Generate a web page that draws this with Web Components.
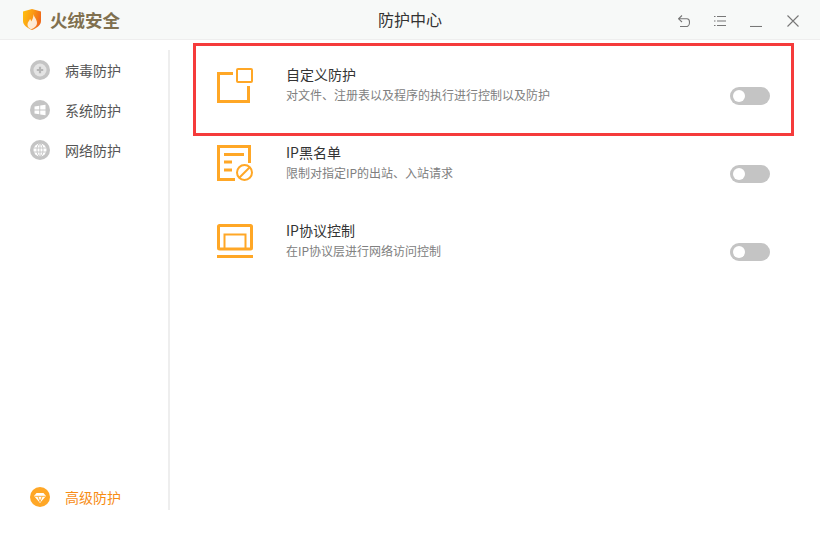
<!DOCTYPE html>
<html>
<head>
<meta charset="utf-8">
<style>
  html, body { margin: 0; padding: 0; }
  body { width: 820px; height: 540px; overflow: hidden; background: #fff; font-family: "Noto Sans CJK SC", "Liberation Sans", sans-serif; }
</style>
</head>
<body>
<app-window>
  <title-bar slot="top"></title-bar>
  <side-nav slot="side">
    <nav-item label="病毒防护" icon="virus"></nav-item>
    <nav-item label="系统防护" icon="windows"></nav-item>
    <nav-item label="网络防护" icon="globe"></nav-item>
    <nav-item slot="bottom" label="高级防护" icon="gem" active></nav-item>
  </side-nav>
  <guard-row highlight icon="custom" heading="自定义防护" text="对文件、注册表以及程序的执行进行控制以及防护"></guard-row>
  <guard-row icon="list" heading="IP黑名单" text="限制对指定IP的出站、入站请求"></guard-row>
  <guard-row icon="screen" heading="IP协议控制" text="在IP协议层进行网络访问控制"></guard-row>
</app-window>
<script>
class AppWindow extends HTMLElement {
  constructor() {
    super();
    this.attachShadow({ mode: "open" });
    this.shadowRoot.innerHTML = `
      <style>
        :host { display: flex; flex-direction: column; width: 820px; height: 540px; }
        .body { display: flex; flex: 1; min-height: 0; }
        .main { flex: 1; padding-top: 3px; display: flex; flex-direction: column; }
      </style>
      <slot name="top"></slot>
      <div class="body">
        <slot name="side"></slot>
        <div class="main"><slot></slot></div>
      </div>`;
  }
}
customElements.define("app-window", AppWindow);

class TitleBar extends HTMLElement {
  constructor() {
    super();
    this.attachShadow({ mode: "open" });
    this.shadowRoot.innerHTML = `
      <style>
        :host { display: flex; align-items: center; height: 39px; background: #f7f9f8; border-bottom: 1px solid #eeeeee; position: relative; flex: none; }
        .logo { display: flex; align-items: center; gap: 9px; padding-left: 23px; width: 300px; }
        .brand { font-size: 17.5px; font-weight: 700; color: #80704f; line-height: 20px; }
        .title { position: absolute; left: 0; right: 0; text-align: center; font-size: 16px; color: #333; line-height: 39px; }
        .tools { margin-left: auto; display: flex; padding-right: 21px; gap: 24px; position: relative; top: 1px; }
        .tools svg:last-child { margin-left: 1px; }
        svg { display: block; }
        .tools svg { fill: none; stroke: #777; stroke-width: 1.1; }
      </style>
      <div class="logo">
        <svg width="18" height="21" viewBox="0 0 18 21">
          <defs><linearGradient id="g" x1="0" y1="0" x2="1" y2="0.3"><stop offset="0" stop-color="#ffc20e"/><stop offset=".55" stop-color="#fb9a14"/><stop offset="1" stop-color="#ef6a1a"/></linearGradient></defs>
          <path d="M0 2.500 9 0l9 2.500v9.500c0 4-4 7-9 9-5-2-9-5-9-9z" fill="url(#g)"/>
          <path d="M10.500 5c.5 3.500 3.500 5 3.500 9 0 3-2.500 5-6 6.300C5.500 19 4.500 17.500 4.500 15.500c0-2.500 2-3.500 2.500-5.500.8.800 1 1.500 1.100 2.500C9.500 10.500 10.500 8 10.500 5z" fill="#fff" fill-opacity=".82"/>
        </svg>
        <span class="brand">火绒安全</span>
      </div>
      <div class="title">防护中心</div>
      <div class="tools">
        <svg width="12" height="12" viewBox="0 0 12 12"><path d="M4 .5.5 3.800 4 7M.5 3.800H9c1.500 0 2.500 1.200 2.500 3.300S10.500 11.500 9 11.500H2"/></svg>
        <svg width="12" height="12" viewBox="0 0 12 12"><path d="M0 1.500h1.500M3 1.500h9M0 6h1.500M3 6h9M0 10.500h1.500M3 10.500h9"/></svg>
        <svg width="12" height="12" viewBox="0 0 12 12"><path d="M0 11.500h12"/></svg>
        <svg width="12" height="12" viewBox="0 0 12 12"><path d="M.5.500l11 11M11.500.500l-11 11"/></svg>
      </div>`;
  }
}
customElements.define("title-bar", TitleBar);

class SideNav extends HTMLElement {
  constructor() {
    super();
    this.attachShadow({ mode: "open" });
    this.shadowRoot.innerHTML = `
      <style>
        :host { display: flex; flex-direction: column; justify-content: space-between; box-sizing: border-box; width: 170px; height: 460px; margin: 10px 0 0; border-right: 2px solid #eeeeee; flex: none; }
        .top { display: flex; flex-direction: column; }
        .bottom { display: block; }
      </style>
      <div class="top"><slot></slot></div>
      <div class="bottom"><slot name="bottom"></slot></div>`;
  }
}
customElements.define("side-nav", SideNav);

const NAV_ICONS = {
  virus: `<circle cx="10" cy="10" r="6.500" fill="#e4e4e4"/><path d="M10 6.800v6.400M6.800 10h6.400" stroke="#b5b5b5" stroke-width="2.200"/>`,
  windows: `<path d="M4.500 6.500 9.300 5.800v3.700H4.500zM10.200 5.600 15.500 4.800v4.700h-5.300zM4.500 10.500h4.800v3.700l-4.800-.7zM10.200 10.500h5.300v4.700l-5.300-.8z" fill="#fff"/>`,
  globe: `<circle cx="10" cy="10" r="6.500" fill="#fff"/><g fill="none" stroke="#c4c4c4" stroke-width=".9"><ellipse cx="10" cy="10" rx="3" ry="6.500"/><path d="M3.500 8h13M3.500 12h13M10 3.500v13"/></g>`,
  gem: `<path d="M6.500 6h7L16 9l-6 7-6-7z" fill="#fff"/><path d="M4.500 9.300h11M7.800 9.300l2.200 5.500 2.200-5.500" stroke="#ffa726" stroke-width=".9" fill="none"/>`
};

class NavItem extends HTMLElement {
  constructor() {
    super();
    this.attachShadow({ mode: "open" });
  }
  connectedCallback() {
    const on = this.hasAttribute("active");
    this.shadowRoot.innerHTML = `
      <style>
        :host { display: flex; align-items: center; height: 40px; padding-left: 30px; gap: 15px; }
        :host([active]) { height: 26px; }
        span { font-size: 14px; color: ${on ? "#f78c14" : "#555"}; line-height: 20px; }
        svg { display: block; }
      </style>
      <svg width="20" height="20" viewBox="0 0 20 20">
        <circle cx="10" cy="10" r="10" fill="${on ? "#ffa726" : "#c4c4c4"}"/>
        ${NAV_ICONS[this.getAttribute("icon")]}
      </svg>
      <span>${this.getAttribute("label")}</span>`;
  }
}
customElements.define("nav-item", NavItem);

const ROW_ICONS = {
  custom: `<path d="M16 6.500H1.500v28h30V19"/><rect x="20" y="2" width="15" height="13" rx="1" stroke-width="2"/>`,
  list: `<path d="M18 34.500H1.500v-33h31V18"/><path d="M7 9.500h20M7 17h8M7 25h8"/><circle cx="27.500" cy="27.500" r="7.500" stroke-width="2"/><path d="M22 33l11-11" stroke-width="2"/>`,
  screen: `<rect x="1.500" y="2.500" width="33" height="23.500" rx="1"/><path d="M7.500 26V11.500h21V26" stroke-width="2"/><path d="M0 33.500h36"/>`
};

class GuardRow extends HTMLElement {
  constructor() {
    super();
    this.attachShadow({ mode: "open" });
  }
  connectedCallback() {
    this.shadowRoot.innerHTML = `
      <style>
        :host { display: block; position: relative; height: 78px; flex: none; }
        .row { display: flex; height: 100%; box-sizing: border-box; padding: 21px 50px 0 47px; }
        svg.ico { display: block; flex: none; fill: none; stroke: #ffa726; stroke-width: 3; margin: 3px 33px 0 0; }
        .txt { flex: 1; }
        h3 { margin: 0; font-size: 14px; font-weight: 400; color: #333; line-height: 20px; }
        p { margin: 1px 0 0; font-size: 12px; color: #808080; line-height: 20px; }
        .box { position: absolute; left: 23px; top: 0; width: 601px; height: 93px; box-sizing: border-box; border: 3px solid #f53b3b; pointer-events: none; }
      </style>
      <div class="row">
        <svg class="ico" width="36" height="36" viewBox="0 0 36 36">${ROW_ICONS[this.getAttribute("icon")]}</svg>
        <div class="txt">
          <h3>${this.getAttribute("heading")}</h3>
          <p>${this.getAttribute("text")}</p>
        </div>
        <toggle-switch></toggle-switch>
      </div>
      ${this.hasAttribute("highlight") ? '<div class="box"></div>' : ""}`;
  }
}
customElements.define("guard-row", GuardRow);

class ToggleSwitch extends HTMLElement {
  constructor() {
    super();
    this.attachShadow({ mode: "open" });
    this.shadowRoot.innerHTML = `
      <style>
        :host { display: block; box-sizing: border-box; width: 40px; height: 18px; margin-top: 23px; border-radius: 9px; background: #c4c4c4; padding: 3px; flex: none; }
        i { display: block; width: 12px; height: 12px; border-radius: 50%; background: #fff; }
      </style>
      <i></i>`;
  }
}
customElements.define("toggle-switch", ToggleSwitch);
</script>
</body>
</html>
